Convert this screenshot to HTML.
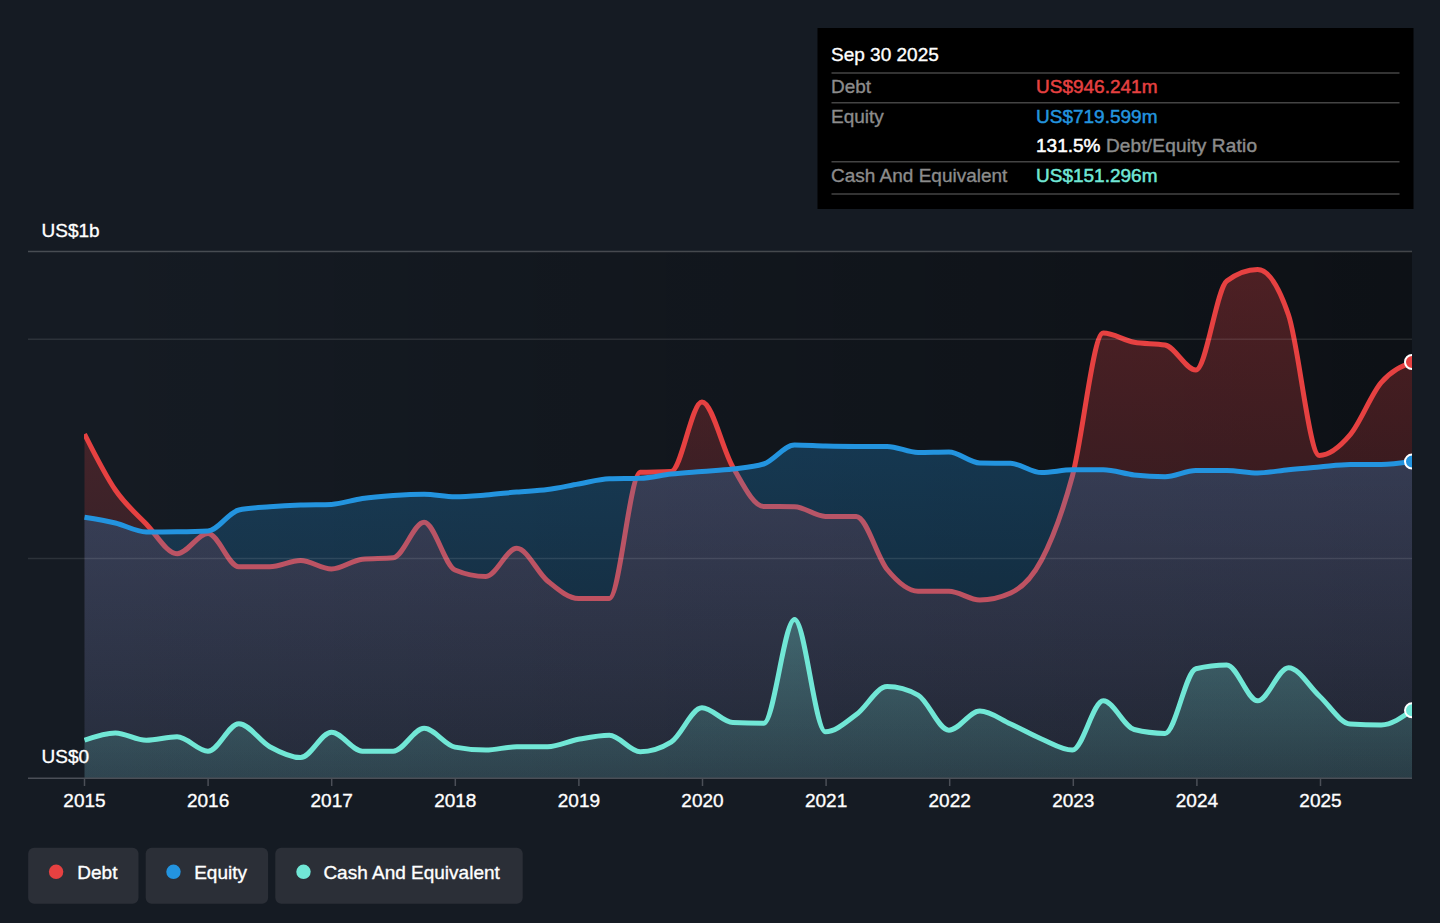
<!DOCTYPE html>
<html><head><meta charset="utf-8">
<style>
html,body{margin:0;padding:0;background:#151b23;width:1440px;height:923px;overflow:hidden;}
svg{position:absolute;left:0;top:0;}
text{font-family:"Liberation Sans", sans-serif;}
</style></head>
<body>
<svg width="1440" height="923" viewBox="0 0 1440 923">
<defs>
<linearGradient id="bgg" x1="84" y1="0" x2="1412" y2="0" gradientUnits="userSpaceOnUse">
<stop offset="0" stop-color="#000" stop-opacity="0"/>
<stop offset="1" stop-color="#000" stop-opacity="0.38"/>
</linearGradient>
<linearGradient id="gr" x1="0" y1="251" x2="0" y2="778" gradientUnits="userSpaceOnUse">
<stop offset="0" stop-color="#e64141" stop-opacity="0.3"/>
<stop offset="1" stop-color="#e64141" stop-opacity="0.08"/>
</linearGradient>
<linearGradient id="gb" x1="0" y1="251" x2="0" y2="778" gradientUnits="userSpaceOnUse">
<stop offset="0" stop-color="#2394df" stop-opacity="0.36"/>
<stop offset="1" stop-color="#2394df" stop-opacity="0.12"/>
</linearGradient>
<linearGradient id="gt" x1="0" y1="600" x2="0" y2="778" gradientUnits="userSpaceOnUse">
<stop offset="0" stop-color="#71e7d6" stop-opacity="0.3"/>
<stop offset="1" stop-color="#71e7d6" stop-opacity="0.13"/>
</linearGradient>
<clipPath id="cp"><rect x="84" y="200" width="1328" height="578"/></clipPath>
<clipPath id="cp2"><rect x="0" y="0" width="1412" height="923"/></clipPath>
</defs>
<rect x="28" y="251" width="1384" height="527" fill="url(#bgg)"/>
<g clip-path="url(#cp)">
<path d="M84.50,434.00C94.79,454.50 105.08,475.00 115.37,490.00C125.66,505.00 135.95,513.38 146.24,524.00C156.53,534.62 166.83,553.70 177.12,553.70C187.41,553.70 197.70,533.50 207.99,533.50C218.28,533.50 228.57,566.80 238.86,566.80C249.15,566.80 259.44,566.80 269.73,566.80C280.02,566.80 290.31,560.50 300.60,560.50C310.90,560.50 321.19,569.00 331.48,569.00C341.77,569.00 352.06,560.20 362.35,559.20C372.64,558.20 382.93,558.70 393.22,557.70C403.51,556.70 413.80,522.30 424.09,522.30C434.38,522.30 444.67,565.67 454.97,570.00C465.26,574.33 475.55,576.50 485.84,576.50C496.13,576.50 506.42,548.30 516.71,548.30C527.00,548.30 537.29,572.63 547.58,581.00C557.87,589.37 568.16,598.50 578.45,598.50C588.74,598.50 599.03,598.50 609.33,598.50C619.62,598.50 629.91,472.83 640.20,472.30C650.49,471.77 660.78,472.03 671.07,471.50C681.36,470.97 691.65,402.00 701.94,402.00C712.23,402.00 722.52,449.58 732.81,467.00C743.10,484.42 753.40,506.37 763.69,506.50C773.98,506.63 784.27,506.57 794.56,506.70C804.85,506.83 815.14,516.40 825.43,516.40C835.72,516.40 846.01,516.40 856.30,516.40C866.59,516.40 876.88,557.03 887.17,569.50C897.47,581.97 907.76,591.20 918.05,591.20C928.34,591.20 938.63,591.20 948.92,591.20C959.21,591.20 969.50,600.00 979.79,600.00C990.08,600.00 1000.37,597.67 1010.66,593.00C1020.95,588.33 1031.24,579.50 1041.53,560.00C1051.83,540.50 1062.12,513.83 1072.41,476.00C1082.70,438.17 1092.99,333.00 1103.28,333.00C1113.57,333.00 1123.86,340.50 1134.15,342.30C1144.44,344.10 1154.73,343.20 1165.02,345.00C1175.31,346.80 1185.60,370.00 1195.90,370.00C1206.19,370.00 1216.48,288.67 1226.77,281.00C1237.06,273.33 1247.35,269.50 1257.64,269.50C1267.93,269.50 1278.22,284.67 1288.51,315.00C1298.80,345.33 1309.09,455.40 1319.38,455.40C1329.67,455.40 1339.97,446.73 1350.26,434.60C1360.55,422.47 1370.84,394.70 1381.13,382.60C1391.42,370.50 1401.71,366.25 1412.00,362.00L1412.00,778.00L84.50,778.00Z" fill="url(#gr)"/>
<path d="M84.50,434.00C94.79,454.50 105.08,475.00 115.37,490.00C125.66,505.00 135.95,513.38 146.24,524.00C156.53,534.62 166.83,553.70 177.12,553.70C187.41,553.70 197.70,533.50 207.99,533.50C218.28,533.50 228.57,566.80 238.86,566.80C249.15,566.80 259.44,566.80 269.73,566.80C280.02,566.80 290.31,560.50 300.60,560.50C310.90,560.50 321.19,569.00 331.48,569.00C341.77,569.00 352.06,560.20 362.35,559.20C372.64,558.20 382.93,558.70 393.22,557.70C403.51,556.70 413.80,522.30 424.09,522.30C434.38,522.30 444.67,565.67 454.97,570.00C465.26,574.33 475.55,576.50 485.84,576.50C496.13,576.50 506.42,548.30 516.71,548.30C527.00,548.30 537.29,572.63 547.58,581.00C557.87,589.37 568.16,598.50 578.45,598.50C588.74,598.50 599.03,598.50 609.33,598.50C619.62,598.50 629.91,472.83 640.20,472.30C650.49,471.77 660.78,472.03 671.07,471.50C681.36,470.97 691.65,402.00 701.94,402.00C712.23,402.00 722.52,449.58 732.81,467.00C743.10,484.42 753.40,506.37 763.69,506.50C773.98,506.63 784.27,506.57 794.56,506.70C804.85,506.83 815.14,516.40 825.43,516.40C835.72,516.40 846.01,516.40 856.30,516.40C866.59,516.40 876.88,557.03 887.17,569.50C897.47,581.97 907.76,591.20 918.05,591.20C928.34,591.20 938.63,591.20 948.92,591.20C959.21,591.20 969.50,600.00 979.79,600.00C990.08,600.00 1000.37,597.67 1010.66,593.00C1020.95,588.33 1031.24,579.50 1041.53,560.00C1051.83,540.50 1062.12,513.83 1072.41,476.00C1082.70,438.17 1092.99,333.00 1103.28,333.00C1113.57,333.00 1123.86,340.50 1134.15,342.30C1144.44,344.10 1154.73,343.20 1165.02,345.00C1175.31,346.80 1185.60,370.00 1195.90,370.00C1206.19,370.00 1216.48,288.67 1226.77,281.00C1237.06,273.33 1247.35,269.50 1257.64,269.50C1267.93,269.50 1278.22,284.67 1288.51,315.00C1298.80,345.33 1309.09,455.40 1319.38,455.40C1329.67,455.40 1339.97,446.73 1350.26,434.60C1360.55,422.47 1370.84,394.70 1381.13,382.60C1391.42,370.50 1401.71,366.25 1412.00,362.00" fill="none" stroke="#e64141" stroke-width="5" stroke-linejoin="round"/>
<path d="M84.50,517.30C94.79,518.92 105.08,520.55 115.37,523.00C125.66,525.45 135.95,532.00 146.24,532.00C156.53,532.00 166.83,531.93 177.12,531.80C187.41,531.67 197.70,531.53 207.99,531.00C218.28,530.47 228.57,512.13 238.86,510.00C249.15,507.87 259.44,507.63 269.73,506.80C280.02,505.97 290.31,505.40 300.60,505.00C310.90,504.60 321.19,504.80 331.48,504.40C341.77,504.00 352.06,499.98 362.35,498.50C372.64,497.02 382.93,496.22 393.22,495.50C403.51,494.78 413.80,494.20 424.09,494.20C434.38,494.20 444.67,496.80 454.97,496.80C465.26,496.80 475.55,495.80 485.84,495.00C496.13,494.20 506.42,492.92 516.71,492.00C527.00,491.08 537.29,490.83 547.58,489.50C557.87,488.17 568.16,485.78 578.45,484.00C588.74,482.22 599.03,479.13 609.33,478.80C619.62,478.47 629.91,478.63 640.20,478.30C650.49,477.97 660.78,475.23 671.07,474.10C681.36,472.97 691.65,472.35 701.94,471.50C712.23,470.65 722.52,470.25 732.81,469.00C743.10,467.75 753.40,467.33 763.69,464.00C773.98,460.67 784.27,445.00 794.56,445.00C804.85,445.00 815.14,445.77 825.43,446.00C835.72,446.23 846.01,446.40 856.30,446.40C866.59,446.40 876.88,446.40 887.17,446.40C897.47,446.40 907.76,452.50 918.05,452.50C928.34,452.50 938.63,452.00 948.92,452.00C959.21,452.00 969.50,462.80 979.79,463.00C990.08,463.20 1000.37,463.10 1010.66,463.30C1020.95,463.50 1031.24,472.60 1041.53,472.60C1051.83,472.60 1062.12,469.80 1072.41,469.80C1082.70,469.80 1092.99,469.80 1103.28,469.80C1113.57,469.80 1123.86,473.83 1134.15,475.00C1144.44,476.17 1154.73,476.80 1165.02,476.80C1175.31,476.80 1185.60,470.50 1195.90,470.50C1206.19,470.50 1216.48,470.50 1226.77,470.50C1237.06,470.50 1247.35,473.00 1257.64,473.00C1267.93,473.00 1278.22,470.70 1288.51,469.70C1298.80,468.70 1309.09,467.87 1319.38,467.00C1329.67,466.13 1339.97,464.50 1350.26,464.50C1360.55,464.50 1370.84,464.50 1381.13,464.50C1391.42,464.50 1401.71,463.05 1412.00,461.60L1412.00,778.00L84.50,778.00Z" fill="url(#gb)"/>
<path d="M84.50,517.30C94.79,518.92 105.08,520.55 115.37,523.00C125.66,525.45 135.95,532.00 146.24,532.00C156.53,532.00 166.83,531.93 177.12,531.80C187.41,531.67 197.70,531.53 207.99,531.00C218.28,530.47 228.57,512.13 238.86,510.00C249.15,507.87 259.44,507.63 269.73,506.80C280.02,505.97 290.31,505.40 300.60,505.00C310.90,504.60 321.19,504.80 331.48,504.40C341.77,504.00 352.06,499.98 362.35,498.50C372.64,497.02 382.93,496.22 393.22,495.50C403.51,494.78 413.80,494.20 424.09,494.20C434.38,494.20 444.67,496.80 454.97,496.80C465.26,496.80 475.55,495.80 485.84,495.00C496.13,494.20 506.42,492.92 516.71,492.00C527.00,491.08 537.29,490.83 547.58,489.50C557.87,488.17 568.16,485.78 578.45,484.00C588.74,482.22 599.03,479.13 609.33,478.80C619.62,478.47 629.91,478.63 640.20,478.30C650.49,477.97 660.78,475.23 671.07,474.10C681.36,472.97 691.65,472.35 701.94,471.50C712.23,470.65 722.52,470.25 732.81,469.00C743.10,467.75 753.40,467.33 763.69,464.00C773.98,460.67 784.27,445.00 794.56,445.00C804.85,445.00 815.14,445.77 825.43,446.00C835.72,446.23 846.01,446.40 856.30,446.40C866.59,446.40 876.88,446.40 887.17,446.40C897.47,446.40 907.76,452.50 918.05,452.50C928.34,452.50 938.63,452.00 948.92,452.00C959.21,452.00 969.50,462.80 979.79,463.00C990.08,463.20 1000.37,463.10 1010.66,463.30C1020.95,463.50 1031.24,472.60 1041.53,472.60C1051.83,472.60 1062.12,469.80 1072.41,469.80C1082.70,469.80 1092.99,469.80 1103.28,469.80C1113.57,469.80 1123.86,473.83 1134.15,475.00C1144.44,476.17 1154.73,476.80 1165.02,476.80C1175.31,476.80 1185.60,470.50 1195.90,470.50C1206.19,470.50 1216.48,470.50 1226.77,470.50C1237.06,470.50 1247.35,473.00 1257.64,473.00C1267.93,473.00 1278.22,470.70 1288.51,469.70C1298.80,468.70 1309.09,467.87 1319.38,467.00C1329.67,466.13 1339.97,464.50 1350.26,464.50C1360.55,464.50 1370.84,464.50 1381.13,464.50C1391.42,464.50 1401.71,463.05 1412.00,461.60" fill="none" stroke="#2394df" stroke-width="5" stroke-linejoin="round"/>
<path d="M84.50,740.20C94.79,736.55 105.08,732.90 115.37,732.90C125.66,732.90 135.95,740.20 146.24,740.20C156.53,740.20 166.83,736.80 177.12,736.80C187.41,736.80 197.70,751.20 207.99,751.20C218.28,751.20 228.57,723.70 238.86,723.70C249.15,723.70 259.44,741.05 269.73,746.70C280.02,752.35 290.31,757.60 300.60,757.60C310.90,757.60 321.19,732.20 331.48,732.20C341.77,732.20 352.06,751.20 362.35,751.20C372.64,751.20 382.93,751.20 393.22,751.20C403.51,751.20 413.80,728.30 424.09,728.30C434.38,728.30 444.67,745.10 454.97,747.10C465.26,749.10 475.55,750.10 485.84,750.10C496.13,750.10 506.42,746.70 516.71,746.70C527.00,746.70 537.29,746.70 547.58,746.70C557.87,746.70 568.16,741.22 578.45,739.30C588.74,737.38 599.03,735.20 609.33,735.20C619.62,735.20 629.91,751.70 640.20,751.70C650.49,751.70 660.78,748.50 671.07,742.10C681.36,735.70 691.65,707.70 701.94,707.70C712.23,707.70 722.52,722.13 732.81,722.60C743.10,723.07 753.40,723.30 763.69,723.30C773.98,723.30 784.27,619.50 794.56,619.50C804.85,619.50 815.14,731.80 825.43,731.80C835.72,731.80 846.01,722.13 856.30,714.60C866.59,707.07 876.88,686.60 887.17,686.60C897.47,686.60 907.76,689.43 918.05,695.10C928.34,700.77 938.63,730.20 948.92,730.20C959.21,730.20 969.50,711.10 979.79,711.10C990.08,711.10 1000.37,719.35 1010.66,724.00C1020.95,728.65 1031.24,734.65 1041.53,739.00C1051.83,743.35 1062.12,750.10 1072.41,750.10C1082.70,750.10 1092.99,700.80 1103.28,700.80C1113.57,700.80 1123.86,726.90 1134.15,729.50C1144.44,732.10 1154.73,733.40 1165.02,733.40C1175.31,733.40 1185.60,671.23 1195.90,668.70C1206.19,666.17 1216.48,664.90 1226.77,664.90C1237.06,664.90 1247.35,700.80 1257.64,700.80C1267.93,700.80 1278.22,667.70 1288.51,667.70C1298.80,667.70 1309.09,686.62 1319.38,696.00C1329.67,705.38 1339.97,723.40 1350.26,724.00C1360.55,724.60 1370.84,724.90 1381.13,724.90C1391.42,724.90 1401.71,717.60 1412.00,710.30L1412.00,778.00L84.50,778.00Z" fill="url(#gt)"/>
<path d="M84.50,740.20C94.79,736.55 105.08,732.90 115.37,732.90C125.66,732.90 135.95,740.20 146.24,740.20C156.53,740.20 166.83,736.80 177.12,736.80C187.41,736.80 197.70,751.20 207.99,751.20C218.28,751.20 228.57,723.70 238.86,723.70C249.15,723.70 259.44,741.05 269.73,746.70C280.02,752.35 290.31,757.60 300.60,757.60C310.90,757.60 321.19,732.20 331.48,732.20C341.77,732.20 352.06,751.20 362.35,751.20C372.64,751.20 382.93,751.20 393.22,751.20C403.51,751.20 413.80,728.30 424.09,728.30C434.38,728.30 444.67,745.10 454.97,747.10C465.26,749.10 475.55,750.10 485.84,750.10C496.13,750.10 506.42,746.70 516.71,746.70C527.00,746.70 537.29,746.70 547.58,746.70C557.87,746.70 568.16,741.22 578.45,739.30C588.74,737.38 599.03,735.20 609.33,735.20C619.62,735.20 629.91,751.70 640.20,751.70C650.49,751.70 660.78,748.50 671.07,742.10C681.36,735.70 691.65,707.70 701.94,707.70C712.23,707.70 722.52,722.13 732.81,722.60C743.10,723.07 753.40,723.30 763.69,723.30C773.98,723.30 784.27,619.50 794.56,619.50C804.85,619.50 815.14,731.80 825.43,731.80C835.72,731.80 846.01,722.13 856.30,714.60C866.59,707.07 876.88,686.60 887.17,686.60C897.47,686.60 907.76,689.43 918.05,695.10C928.34,700.77 938.63,730.20 948.92,730.20C959.21,730.20 969.50,711.10 979.79,711.10C990.08,711.10 1000.37,719.35 1010.66,724.00C1020.95,728.65 1031.24,734.65 1041.53,739.00C1051.83,743.35 1062.12,750.10 1072.41,750.10C1082.70,750.10 1092.99,700.80 1103.28,700.80C1113.57,700.80 1123.86,726.90 1134.15,729.50C1144.44,732.10 1154.73,733.40 1165.02,733.40C1175.31,733.40 1185.60,671.23 1195.90,668.70C1206.19,666.17 1216.48,664.90 1226.77,664.90C1237.06,664.90 1247.35,700.80 1257.64,700.80C1267.93,700.80 1278.22,667.70 1288.51,667.70C1298.80,667.70 1309.09,686.62 1319.38,696.00C1329.67,705.38 1339.97,723.40 1350.26,724.00C1360.55,724.60 1370.84,724.90 1381.13,724.90C1391.42,724.90 1401.71,717.60 1412.00,710.30" fill="none" stroke="#71e7d6" stroke-width="5" stroke-linejoin="round"/>
</g>
<line x1="28" y1="251.5" x2="1412" y2="251.5" stroke="#fff" stroke-opacity="0.22" stroke-width="1.5"/>
<line x1="28" y1="339.3" x2="1412" y2="339.3" stroke="#fff" stroke-opacity="0.1" stroke-width="1.5"/>
<line x1="28" y1="558.6" x2="1412" y2="558.6" stroke="#fff" stroke-opacity="0.1" stroke-width="1.5"/>
<line x1="28" y1="778.2" x2="1412" y2="778.2" stroke="#4b4f57" stroke-width="1.5"/>
<line x1="84.5" y1="778" x2="84.5" y2="786" stroke="#4b4f57" stroke-width="1.5"/><line x1="208.1" y1="778" x2="208.1" y2="786" stroke="#4b4f57" stroke-width="1.5"/><line x1="331.7" y1="778" x2="331.7" y2="786" stroke="#4b4f57" stroke-width="1.5"/><line x1="455.3" y1="778" x2="455.3" y2="786" stroke="#4b4f57" stroke-width="1.5"/><line x1="578.9" y1="778" x2="578.9" y2="786" stroke="#4b4f57" stroke-width="1.5"/><line x1="702.5" y1="778" x2="702.5" y2="786" stroke="#4b4f57" stroke-width="1.5"/><line x1="826.1" y1="778" x2="826.1" y2="786" stroke="#4b4f57" stroke-width="1.5"/><line x1="949.7" y1="778" x2="949.7" y2="786" stroke="#4b4f57" stroke-width="1.5"/><line x1="1073.3" y1="778" x2="1073.3" y2="786" stroke="#4b4f57" stroke-width="1.5"/><line x1="1196.9" y1="778" x2="1196.9" y2="786" stroke="#4b4f57" stroke-width="1.5"/><line x1="1320.5" y1="778" x2="1320.5" y2="786" stroke="#4b4f57" stroke-width="1.5"/>
<g clip-path="url(#cp2)">
<circle cx="1412.0" cy="362" r="7" fill="#e64141" stroke="#fff" stroke-width="2"/>
<circle cx="1412.0" cy="461.6" r="7" fill="#2394df" stroke="#fff" stroke-width="2"/>
<circle cx="1412.0" cy="710.3" r="7" fill="#71e7d6" stroke="#fff" stroke-width="2"/>
</g>
<g font-size="19" fill="#fff" stroke="#fff" stroke-width="0.35">
<text x="41.5" y="237">US$1b</text>
<text x="41.5" y="763">US$0</text>
<text x="84.5" y="806.7" text-anchor="middle">2015</text><text x="208.1" y="806.7" text-anchor="middle">2016</text><text x="331.7" y="806.7" text-anchor="middle">2017</text><text x="455.3" y="806.7" text-anchor="middle">2018</text><text x="578.9" y="806.7" text-anchor="middle">2019</text><text x="702.5" y="806.7" text-anchor="middle">2020</text><text x="826.1" y="806.7" text-anchor="middle">2021</text><text x="949.7" y="806.7" text-anchor="middle">2022</text><text x="1073.3" y="806.7" text-anchor="middle">2023</text><text x="1196.9" y="806.7" text-anchor="middle">2024</text><text x="1320.5" y="806.7" text-anchor="middle">2025</text>
</g>
<rect x="817.5" y="28" width="596" height="181" fill="#000"/>
<g font-size="19">
<text x="831" y="61.1" fill="#fff" stroke="#fff" stroke-width="0.35">Sep 30 2025</text>
<line x1="831.5" y1="72.9" x2="1399.5" y2="72.9" stroke="#444" stroke-width="1.5"/>
<text x="831" y="92.9" fill="#8c8c8c" stroke="#8c8c8c" stroke-width="0.35">Debt</text>
<text x="1036" y="92.9" fill="#e64141" stroke="#e64141" stroke-width="0.5" font-weight="normal">US$946.241m</text>
<line x1="831.5" y1="102.7" x2="1399.5" y2="102.7" stroke="#444" stroke-width="1.5"/>
<text x="831" y="122.7" fill="#8c8c8c" stroke="#8c8c8c" stroke-width="0.35">Equity</text>
<text x="1036" y="122.7" fill="#2394df" stroke="#2394df" stroke-width="0.5" font-weight="normal">US$719.599m</text>
<text x="1036" y="152.2" fill="#fff" stroke="#fff" stroke-width="0.5">131.5%<tspan fill="#8c8c8c" stroke="#8c8c8c" stroke-width="0.45" letter-spacing="0.2"> Debt/Equity Ratio</tspan></text>
<line x1="831.5" y1="161.8" x2="1399.5" y2="161.8" stroke="#444" stroke-width="1.5"/>
<text x="831" y="182.2" fill="#8c8c8c" stroke="#8c8c8c" stroke-width="0.35">Cash And Equivalent</text>
<text x="1036" y="182.2" fill="#71e7d6" stroke="#71e7d6" stroke-width="0.5" font-weight="normal">US$151.296m</text>
<line x1="831.5" y1="194" x2="1399.5" y2="194" stroke="#444" stroke-width="1.5"/>
</g>
<g font-size="19" fill="#fff" stroke="#fff" stroke-width="0.35">
<rect x="28.2" y="847.7" width="110.3" height="56" rx="6" fill="#2b2f37" stroke="none"/>
<circle cx="56.1" cy="871.8" r="7.2" fill="#e64141" stroke="none"/>
<text x="77.3" y="879">Debt</text>
<rect x="145.7" y="847.7" width="122.4" height="56" rx="6" fill="#2b2f37" stroke="none"/>
<circle cx="173.5" cy="871.8" r="7.2" fill="#2394df" stroke="none"/>
<text x="194.2" y="879">Equity</text>
<rect x="275.3" y="847.7" width="247.4" height="56" rx="6" fill="#2b2f37" stroke="none"/>
<circle cx="303.5" cy="871.8" r="7.2" fill="#71e7d6" stroke="none"/>
<text x="323.4" y="879">Cash And Equivalent</text>
</g>
</svg>
</body></html>
